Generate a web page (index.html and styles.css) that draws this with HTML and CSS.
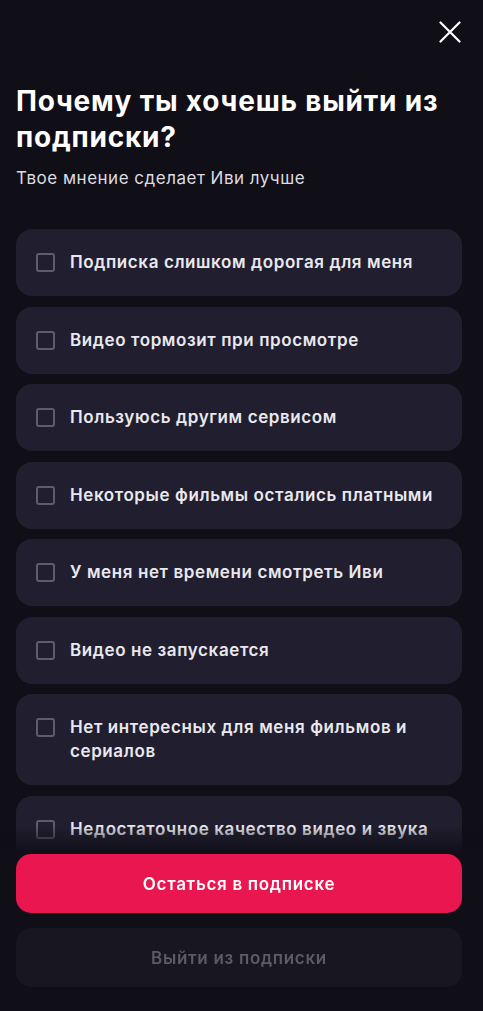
FILE: index.html
```
<!DOCTYPE html>
<html lang="ru">
<head>
    <meta charset="UTF-8">
    <meta name="viewport" content="width=device-width, initial-scale=1.0">
    <title>Отмена подписки</title>
    <link rel="stylesheet" href="styles.css">
</head>
<body>
    <div class="page">
        <div class="top">
            <button class="close" aria-label="Закрыть">
                <svg width="22" height="22" viewBox="0 0 22 22">
                    <path d="M1.5 1.5 L20.5 20.5 M20.5 1.5 L1.5 20.5" stroke="#fff" stroke-width="2.2" stroke-linecap="round"/>
                </svg>
            </button>
        </div>
        <h1 class="title">Почему ты хочешь выйти из подписки?</h1>
        <p class="subtitle">Твое мнение сделает Иви лучше</p>

        <div class="reasons">
            <label class="reason"><span class="box"></span><span>Подписка слишком дорогая для меня</span></label>
            <label class="reason"><span class="box"></span><span>Видео тормозит при просмотре</span></label>
            <label class="reason"><span class="box"></span><span>Пользуюсь другим сервисом</span></label>
            <label class="reason"><span class="box"></span><span>Некоторые фильмы остались платными</span></label>
            <label class="reason"><span class="box"></span><span>У меня нет времени смотреть Иви</span></label>
            <label class="reason"><span class="box"></span><span>Видео не запускается</span></label>
            <label class="reason"><span class="box"></span><span>Нет интересных для меня фильмов и сериалов</span></label>
            <label class="reason"><span class="box"></span><span>Недостаточное качество видео и звука</span></label>
            <label class="reason"><span class="box"></span><span>Другое</span></label>
        </div>
    </div>

    <div class="footer">
        <button class="btn btn-stay">Остаться в подписке</button>
        <button class="btn btn-leave">Выйти из подписки</button>
    </div>
</body>
</html>
```

FILE: styles.css
```
* {
    margin: 0;
    padding: 0;
    box-sizing: border-box;
    font-family: Inter, "Noto Sans", sans-serif;
}
body {
    background: #100e17;
    color: #fff;
    min-height: 100vh;
    overflow: hidden;
}
.page {
    padding: 0 21px 0 16px;
}
.top {
    display: flex;
    justify-content: flex-end;
    padding-top: 21px;
    padding-right: 1px;
}
.close {
    width: 22px;
    height: 22px;
    background: none;
    border: none;
    cursor: pointer;
}
.close svg {
    display: block;
}
.title {
    margin-top: 40px;
    font-size: 28px;
    line-height: 36px;
    font-weight: 700;
    letter-spacing: 0.8px;
}
.subtitle {
    margin-top: 12px;
    font-size: 17px;
    line-height: 22px;
    letter-spacing: 0.5px;
    color: #dcdbe0;
}
.reasons {
    display: flex;
    flex-direction: column;
    gap: 10.5px;
    margin-top: 40px;
}
.reason {
    display: flex;
    align-items: flex-start;
    gap: 15px;
    padding: 21px 20px 22px;
    background: #211f2f;
    border-radius: 16px;
    font-size: 17px;
    line-height: 24px;
    font-weight: 600;
    letter-spacing: 0.6px;
    color: #e9e8ee;
    cursor: pointer;
}
.box {
    flex: none;
    width: 19px;
    height: 19px;
    margin-top: 3px;
    border: 2px solid #5f5d6c;
    border-radius: 3px;
}
.footer {
    position: fixed;
    left: 0;
    right: 0;
    bottom: 0;
    padding: 28px 21px 24px 16px;
    display: flex;
    flex-direction: column;
    gap: 15px;
    background: linear-gradient(to bottom, rgba(16, 14, 23, 0) 0, #100e17 28px);
}
.btn {
    height: 59px;
    border: none;
    border-radius: 15px;
    font-size: 17px;
    font-weight: 600;
    letter-spacing: 0.7px;
    cursor: pointer;
}
.btn-stay {
    background: #ea1650;
    color: #fff;
}
.btn-leave {
    background: #18161f;
    color: #5c5a66;
}
```
